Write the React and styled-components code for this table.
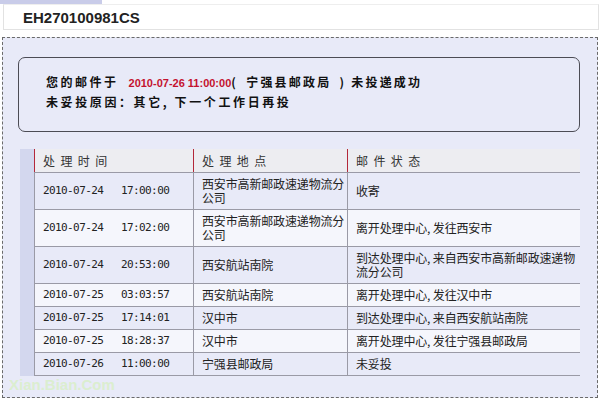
import React from 'react'
import styled, {createGlobalStyle} from 'styled-components'

const GlobalStyle = createGlobalStyle`
  body {
    margin: 0;
    background: #fff;
    font-family: "Noto Sans CJK SC", "Liberation Sans", sans-serif;
    color: #222;
  }
`

const Page = styled.div`
  position: relative;
  width: 600px;
  height: 399px;
  overflow: hidden;
`

const TabStrip = styled.div`
  width: 102px;
  height: 4px;
  background: #c9cce9;
`

const TitleBar = styled.div`
  margin: 0 1px 0 3px;
  height: 24px;
  border: 1px solid #e2e2e2;
  border-top-color: #eee;
  padding-left: 19px;
  display: flex;
  align-items: center;
  font-family: "Liberation Sans", Arial, sans-serif;
  font-weight: bold;
  font-size: 15px;
  color: #222;
`

const Panel = styled.div`
  margin: 7px 2px 0 2px;
  height: 340px;
  border: 1px dashed #6a6a6a;
  background: #e8eaf8;
  padding: 19px 17px 0 15px;
`

const Notice = styled.div`
  height: 59px;
  border: 1px solid #4c4c55;
  border-radius: 7px;
  padding: 14px 0 0 27px;
`

const NoticeLine = styled.div`
  height: 20px;
  line-height: 20px;
  font-size: 12px;
  font-weight: bold;
  letter-spacing: ${p => p.$spacing || '2.5px'};
  color: #111;
  white-space: pre;
`

const DateMark = styled.span`
  font-family: "Liberation Sans", Arial, sans-serif;
  font-size: 11px;
  letter-spacing: 0;
  color: #c4122f;
  margin-left: 10px;
`

const Tail = styled.span`
  letter-spacing: 2.2px;
`

const TableWrap = styled.div`
  margin: 17px 0 0 2px;
  border-left: 14px solid #d3d7ee;
`

const Table = styled.table`
  width: 100%;
  border-collapse: collapse;
  table-layout: fixed;
  font-size: 12px;
  color: #222;
`

const HeadCell = styled.th`
  height: 23px;
  padding: 0 0 0 8px;
  text-align: left;
  font-weight: normal;
  background: #ededf1;
  border-left: 1px solid #b3283a;
  border-bottom: 1px solid #9a9aa6;
  color: #333;
  letter-spacing: 0.6px;
  word-spacing: 1.5px;
  white-space: pre;
`

const Row = styled.tr`
  background: ${p => (p.$alt ? '#f5f6fc' : '#e8eaf8')};
`

const Cell = styled.td`
  padding: 4px 0 4px 8px;
  line-height: 14px;
  height: 14px;
  vertical-align: middle;
  letter-spacing: -0.15px;
  border-left: 1px solid #9a9aa6;
  border-bottom: 1px solid #9a9aa6;
`

const Clock = styled.span`
  display: inline-block;
  vertical-align: top;
  width: ${p => p.$width || 'auto'};
  font-family: "DejaVu Sans Mono", monospace;
  font-size: 11px;
  letter-spacing: -0.6px;
  line-height: 14px;
`

const Watermark = styled.div`
  position: absolute;
  left: 9px;
  top: 376px;
  font-family: "Liberation Sans", Arial, sans-serif;
  font-weight: bold;
  font-size: 15px;
  color: #d9efc6;
  opacity: 0.8;
`

const rows = [
  ['2010-07-24', '17:00:00', '西安市高新邮政速递物流分公司', '收寄'],
  ['2010-07-24', '17:02:00', '西安市高新邮政速递物流分公司', '离开处理中心, 发往西安市'],
  ['2010-07-24', '20:53:00', '西安航站南院', '到达处理中心, 来自西安市高新邮政速递物流分公司'],
  ['2010-07-25', '03:03:57', '西安航站南院', '离开处理中心, 发往汉中市'],
  ['2010-07-25', '17:14:01', '汉中市', '到达处理中心, 来自西安航站南院'],
  ['2010-07-25', '18:28:37', '汉中市', '离开处理中心, 发往宁强县邮政局'],
  ['2010-07-26', '11:00:00', '宁强县邮政局', '未妥投']
]

export default function App() {
  return (
    <Page>
      <GlobalStyle />
      <TabStrip />
      <TitleBar>EH270100981CS</TitleBar>
      <Panel>
        <Notice>
          <NoticeLine>
            您的邮件于<DateMark>2010-07-26 11:00:00</DateMark>
            <Tail>{'(\u2002宁强县邮政局\u2002) 未投递成功'}</Tail>
          </NoticeLine>
          <NoticeLine $spacing="2.6px">未妥投原因：其它, 下一个工作日再投</NoticeLine>
        </Notice>
        <TableWrap>
          <Table>
            <colgroup>
              <col style={{width: 159}} />
              <col style={{width: 154}} />
              <col />
            </colgroup>
            <thead>
              <tr>
                <HeadCell>处 理 时 间</HeadCell>
                <HeadCell>处 理 地 点</HeadCell>
                <HeadCell>邮 件 状 态</HeadCell>
              </tr>
            </thead>
            <tbody>
              {rows.map((r, i) => (
                <Row key={i} $alt={i % 2 === 1}>
                  <Cell>
                    <Clock $width="78px">{r[0]}</Clock>
                    <Clock>{r[1]}</Clock>
                  </Cell>
                  <Cell>{r[2]}</Cell>
                  <Cell>{r[3]}</Cell>
                </Row>
              ))}
            </tbody>
          </Table>
        </TableWrap>
      </Panel>
      <Watermark>Xian.Bian.Com</Watermark>
    </Page>
  )
}
